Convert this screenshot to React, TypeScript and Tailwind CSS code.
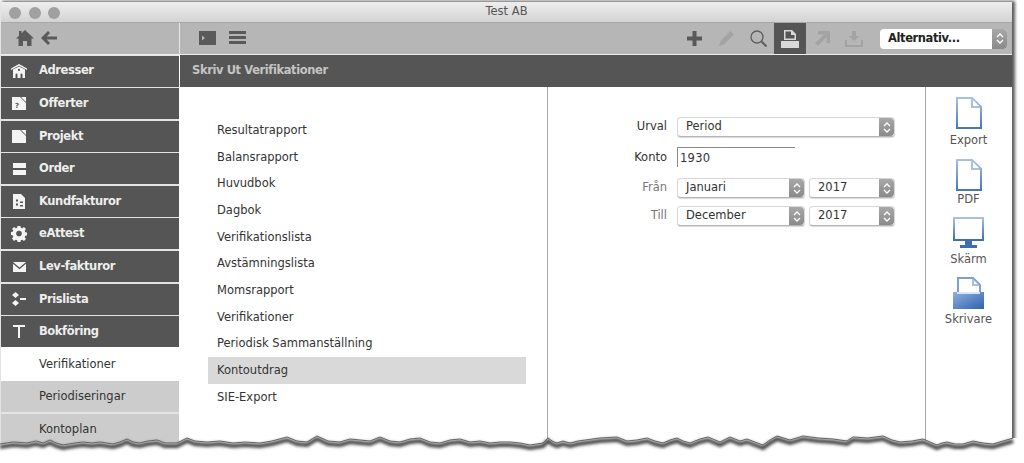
import type { ReactNode } from "react";

const font = { fontFamily: '"DejaVu Sans", Verdana, sans-serif' };

const Ico = ({ w = 18, h = 18, children, className = "" }: { w?: number; h?: number; children: ReactNode; className?: string }) => (
  <svg width={w} height={h} viewBox={`0 0 ${w} ${h}`} className={`shrink-0 ${className}`} fill="currentColor">
    {children}
  </svg>
);

const sideIcons: Record<string, ReactNode> = {
  Adresser: (
    <Ico w={16} h={14}>
      <path d="M8 0 16 4.500V6L8 1.800 0 6V4.500z" />
      <path fillRule="evenodd" d="M2 5.500 8 2.500l6 3V14h-2.500v-3.500a1 1 0 0 0-2 0V14h-3v-3.500a1 1 0 0 0-2 0V14H2zM8 4.800a1.100 1.100 0 1 0 0 2.200 1.100 1.100 0 0 0 0-2.200z" />
    </Ico>
  ),
  Offerter: (
    <Ico w={14} h={13}>
      <path d="M0 0h8l6 6v7H0zM9 0l5 5V0z" />
      <text x="3" y="11" fontSize="7" fill="#555" fontWeight="700">?</text>
    </Ico>
  ),
  Projekt: (
    <Ico w={14} h={13}>
      <path d="M0 0h8l6 6v7H0zM9 0l5 5V0z" />
    </Ico>
  ),
  Order: (
    <Ico w={13} h={12}>
      <path d="M0 0h13v5H0zM0 7h13v5H0z" />
    </Ico>
  ),
  Kundfakturor: (
    <Ico w={12} h={15}>
      <path d="M0 0h8l4 4v11H0z" />
      <path d="M3 5.500h2v2H3zM3 9.500h2v2H3zM7 7.500h3v1.500H7zM7 11h3v1.500H7z" fill="#555" />
    </Ico>
  ),
  eAttest: (
    <Ico w={16} h={16}>
      <path
        fillRule="evenodd"
        d="M6.500 0h3l.4 2.300 1.500.6L13.300 1.600l2.100 2.100-1.300 1.900.6 1.500 2.300.4v3l-2.300.4-.6 1.500 1.300 1.900-2.100 2.100-1.900-1.300-1.500.6-.4 2.300h-3l-.4-2.300-1.500-.6-1.900 1.300L.6 13.800l1.300-1.900-.6-1.500L-1 10V7l2.300-.4.600-1.500L.6 3.700l2.100-2.100 1.900 1.300 1.500-.6zM8 5.500a3 3 0 1 0 0 6 3 3 0 0 0 0-6z"
        transform="scale(.94) translate(.5 -.5)"
      />
    </Ico>
  ),
  "Lev-fakturor": (
    <Ico w={13} h={10}>
      <path d="M0 0h13L6.500 5.500zM0 1.800V10h13V1.800L6.500 7.300z" />
    </Ico>
  ),
  Prislista: (
    <Ico w={14} h={14}>
      <path d="M3.500 0 7 3 3.500 6 0 3zM3.500 8 7 11l-3.500 3L0 11zM8 6h6v2H8z" />
    </Ico>
  ),
  "Bokföring": (
    <Ico w={12} h={13}>
      <path d="M0 0h12v2H7v11H5V2H0z" />
    </Ico>
  ),
};

const mainItems = ["Adresser", "Offerter", "Projekt", "Order", "Kundfakturor", "eAttest", "Lev-fakturor", "Prislista", "Bokföring"];
const reports = [
  "Resultatrapport",
  "Balansrapport",
  "Huvudbok",
  "Dagbok",
  "Verifikationslista",
  "Avstämningslista",
  "Momsrapport",
  "Verifikationer",
  "Periodisk Sammanställning",
  "Kontoutdrag",
  "SIE-Export",
];

const Stepper = () => (
  <span className="absolute right-0 top-0 bottom-0 w-[15px] rounded-r-[4px] bg-gradient-to-b from-[#a8a8a8] to-[#8a8a8a] flex items-center justify-center">
    <svg width="8" height="13" viewBox="0 0 8 13" fill="none" stroke="#fff" strokeWidth="1.300">
      <path d="M1 5 4 2l3 3M1 8l3 3 3-3" />
    </svg>
  </span>
);

const Select = ({ label, className = "" }: { label: string; className?: string }) => (
  <div className={`relative h-5 rounded-[4px] bg-white border border-[#d8d8d8] border-b-[#b5b5b5] shadow-[0_1px_1px_rgba(0,0,0,.15)] pl-2 flex items-center text-[11.500px] text-[#333] ${className}`}>
    {label}
    <Stepper />
  </div>
);

const Label = ({ children, muted = false, className = "" }: { children: ReactNode; muted?: boolean; className?: string }) => (
  <span className={`w-[50px] mr-[10px] text-right text-[11.500px] ${muted ? "text-[#777]" : "text-[#333]"} ${className}`}>{children}</span>
);

const PageIcon = () => (
  <svg width="26" height="32" viewBox="0 0 26 32">
    <defs>
      <linearGradient id="pg" x1="0" y1="0" x2="0" y2="1">
        <stop offset="0" stopColor="#a9c0e0" />
        <stop offset="1" stopColor="#4a76b8" />
      </linearGradient>
    </defs>
    <path d="M1 1h15l9 9v21H1z" fill="#fff" stroke="url(#pg)" strokeWidth="2" />
    <path d="M15 1v10h10z" fill="#a9c0e0" />
    <path d="M17 3v6h6z" fill="#fff" />
  </svg>
);

const ScreenIcon = () => (
  <svg width="31" height="32" viewBox="0 0 31 32">
    <defs>
      <linearGradient id="sc" x1="0" y1="0" x2="0" y2="1">
        <stop offset="0" stopColor="#a9c0e0" />
        <stop offset="1" stopColor="#3f6db2" />
      </linearGradient>
    </defs>
    <rect x="1" y="1" width="29" height="22" fill="#fff" stroke="url(#sc)" strokeWidth="2" />
    <path d="M12 24h7v4h5v3H7v-3h5z" fill="#3f6db2" />
  </svg>
);

const PrinterIcon = () => (
  <svg width="31" height="32" viewBox="0 0 31 32">
    <defs>
      <linearGradient id="pr" x1="0" y1="0" x2="1" y2="1">
        <stop offset="0" stopColor="#8fb0de" />
        <stop offset="1" stopColor="#2f62ae" />
      </linearGradient>
    </defs>
    <path d="M5 1h15l7 7v10H5z" fill="#fff" stroke="#7f9fd0" strokeWidth="2" />
    <path d="M19 1v8h8z" fill="#a9c0e0" />
    <path d="M21 3.500V7h3.500z" fill="#fff" />
    <path d="M0 15h31v17H0z" fill="url(#pr)" />
    <path d="M4 15h23v2H4z" fill="#dbe5f4" />
  </svg>
);

const edge =
  "0,444 13,442 27,443 36,441 43,443 50,440 56,443 63,445 75,443 83,442 92,443 100,442 113,444 120,442 127,439 133,442 140,443 148,441 157,440 165,443 177,443 187,438 195,441 207,442 220,441 233,443 245,442 260,443 272,441 287,437 297,441 307,442 317,436 328,441 340,442 350,439 360,440 370,441 380,437 390,441 400,442 410,439 420,438 430,442 440,443 450,440 460,439 470,442 480,441 490,443 500,442 510,442 520,443 530,445 543,443 548,438 552,441 557,443 563,441 570,443 578,441 600,438 617,437 627,441 637,440 647,438 655,441 663,443 670,440 677,438 683,441 690,443 700,439 708,437 720,442 730,437 740,441 747,439 755,442 763,445 770,440 777,436 790,440 803,436 818,438 833,439 847,441 853,437 868,438 883,436 892,440 900,442 912,441 923,439 930,442 937,445 942,443 947,442 955,444 963,444 973,441 983,443 993,444 1003,441 1010,439 1013,438";

const TornEdge = () => (
  <svg width="1024" height="463" viewBox="0 0 1024 463" className="absolute inset-0 pointer-events-none">
    <defs>
      <filter id="bl" x="-5%" y="-300%" width="110%" height="700%">
        <feGaussianBlur stdDeviation="1.800" />
      </filter>
    </defs>
    <polygon points={`${edge} 1024,438 1024,463 0,463`} fill="#fff" />
    <polyline points={edge} transform="translate(0 3)" fill="none" stroke="#444" strokeWidth="4" filter="url(#bl)" />
    <polyline points={edge} fill="none" stroke="#666" strokeWidth="1" />
  </svg>
);

export default function App() {
  return (
    <div className="relative w-[1024px] h-[463px] overflow-hidden bg-white antialiased" style={font}>
      <div className="ml-px mt-[2px] w-[1011px] h-[461px] flex flex-col shadow-[2px_0_3px_1px_rgba(0,0,0,.65)] bg-white">
        {/* title bar */}
        <div className="relative h-[21px] shrink-0 bg-gradient-to-b from-[#eeeeee] to-[#d3d3d3] flex items-center justify-center text-[11.500px] text-[#555] border-b border-[#a8a8a8]">
          <div className="absolute left-[8px] top-[5px] flex gap-[7.500px]">
            <span className="size-3 rounded-full bg-[#a0a0a0]" />
            <span className="size-3 rounded-full bg-[#a0a0a0]" />
            <span className="size-3 rounded-full bg-[#a0a0a0]" />
          </div>
          Test AB
        </div>

        {/* toolbar */}
        <div className="h-[31px] shrink-0 bg-[#b6b6b6] flex">
          <div className="w-[179px] shrink-0 flex items-center text-[#5a5a5a] pl-[15px] pb-[2px] gap-[7px] border-r border-[#e8e8e8]">
            <svg width="18" height="16" viewBox="0 0 18 16" fill="currentColor">
              <path d="M9 0 18 8.500h-2.500V16H11v-5H7v5H2.500V8.500H0L3 5.700V1h2.500v2.300z" />
            </svg>
            <svg width="16" height="14" viewBox="0 0 16 14" fill="currentColor">
              <path d="M7 0l2 2-3.300 3.500H16v3H5.700L9 12l-2 2-7-7z" />
            </svg>
          </div>
          <div className="flex-1 flex items-center text-[#5a5a5a] pl-[19px]">
            <svg width="17" height="14" viewBox="0 0 17 14" fill="currentColor" className="-mt-[2px]">
              <path fillRule="evenodd" d="M0 0h17v14H0zM3 4.500v5L6 7z" />
            </svg>
            <svg width="17" height="13" viewBox="0 0 17 13" fill="currentColor" className="ml-[13px] -mt-[2px]">
              <path d="M0 0h17v3H0zM0 5h17v3H0zM0 10h17v3H0z" />
            </svg>
            <div className="ml-auto flex items-center h-full">
              <span className="w-8 flex justify-center">
                <svg width="15" height="15" viewBox="0 0 15 15" fill="#595959">
                  <path d="M5.500 0h4v5.500H15v4H9.500V15h-4V9.500H0v-4h5.500z" />
                </svg>
              </span>
              <span className="w-8 flex justify-center">
                <svg width="15" height="15" viewBox="0 0 15 15" fill="#a3a3a3">
                  <path d="M11.500 0 15 3.500 5 13.500 0 15l1.500-5z" />
                </svg>
              </span>
              <span className="w-8 flex justify-center">
                <svg width="17" height="17" viewBox="0 0 17 17" fill="none" stroke="#5f5f5f" strokeWidth="1.300">
                  <circle cx="7" cy="7" r="6" />
                  <path d="m11.500 11.500 5 5" strokeWidth="2" />
                </svg>
              </span>
              <span className="w-8 h-full bg-[#555] flex items-center justify-center">
                <svg width="18" height="18" viewBox="0 0 18 18" fill="#d8d8d8">
                  <path fillRule="evenodd" d="M3 0h8l4 4v6H3zM4.500 1.500V8.500h9V5H10V1.500z" />
                  <path d="M0 11h18v7H0z" />
                </svg>
              </span>
              <span className="w-8 flex justify-center">
                <svg width="15" height="15" viewBox="0 0 15 15" fill="#a3a3a3">
                  <path d="M3 0h12v12h-3.500V6L3 15l-3-3 9-8.500H3z" />
                </svg>
              </span>
              <span className="w-8 flex justify-center">
                <svg width="18" height="16" viewBox="0 0 18 16" fill="#a3a3a3">
                  <path d="M7 0h4v5h3l-5 5-5-5h3zM0 9h2v5h14V9h2v7H0z" />
                </svg>
              </span>
              <div className="relative ml-[10px] mr-[5px] w-[127px] h-5 rounded-[4px] bg-white pl-2 flex items-center text-[11.500px] tracking-[-0.400px] font-bold text-[#222]">
                Alternativ...
                <Stepper />
              </div>
            </div>
          </div>
        </div>

        <div className="h-[1px] shrink-0 bg-[#eeeeee]" />

        <div className="flex-1 flex min-h-0">
          {/* sidebar */}
          <div className="w-[178px] shrink-0 mr-px pt-[0.500px] flex flex-col bg-[#e4e4e4]">
            {mainItems.map((item) => (
              <div key={item} className="h-[31px] mb-[1.600px] shrink-0 bg-[#555] flex items-center text-[11.500px] tracking-[-0.400px] font-bold text-[#eeeeee]">
                <span className="w-[38px] flex justify-center pl-[6px] pr-[8px] text-[#f4f4f4]">{sideIcons[item]}</span>
                {item}
              </div>
            ))}
            <div className="h-[34px] -mt-[1.600px] shrink-0 bg-white flex items-center pl-[38px] text-[11.500px] text-[#333]">Verifikationer</div>
            <div className="h-[31px] mb-[1.600px] shrink-0 bg-[#cccccc] flex items-center pl-[38px] text-[11.500px] text-[#333]">Periodiseringar</div>
            <div className="h-[31px] shrink-0 bg-[#cccccc] flex items-center pl-[38px] text-[11.500px] text-[#333]">Kontoplan</div>
          </div>

          <div className="flex-1 flex flex-col min-w-0">
            {/* heading */}
            <div className="h-[32px] shrink-0 bg-[#555] flex items-center pl-3 pb-px text-[11.500px] tracking-[-0.400px] font-bold text-[#c4c4c4]">Skriv Ut Verifikationer</div>

            <div className="flex-1 flex min-h-0">
              {/* report list */}
              <div className="w-[368px] shrink-0 border-r border-[#a8a8a8] pt-[30.500px] pl-[28px] pr-[21px]">
                {reports.map((r) => (
                  <div key={r} className={`h-[26.650px] flex items-center pl-[9px] text-[11.500px] text-[#333] ${r === "Kontoutdrag" ? "bg-[#d9d9d9]" : ""}`}>
                    {r}
                  </div>
                ))}
              </div>

              {/* form */}
              <div className="w-[378px] shrink-0 border-r border-[#a8a8a8] pt-[30px] pl-[69px] flex flex-col">
                <div className="flex items-center">
                  <Label>Urval</Label>
                  <Select label="Period" className="w-[218px]" />
                </div>
                <div className="flex items-center mt-[10px]">
                  <Label className="pt-[2px]">Konto</Label>
                  <div className="w-[118px] h-5 pt-[2px] border-t border-l border-[#8a8a8a] pl-[2px] flex items-center text-[11.500px] text-[#333] tracking-wide">1930</div>
                </div>
                <div className="flex items-center mt-[11px]">
                  <Label muted>Från</Label>
                  <Select label="Januari" className="w-[128px]" />
                  <Select label="2017" className="w-[86px] ml-[4px]" />
                </div>
                <div className="flex items-center mt-[8px]">
                  <Label muted>Till</Label>
                  <Select label="December" className="w-[128px]" />
                  <Select label="2017" className="w-[86px] ml-[4px]" />
                </div>
              </div>

              {/* output choices */}
              <div className="flex-1 flex flex-col items-center pt-[10px] text-[11.500px] text-[#555] pr-[1px]">
                <PageIcon />
                <span className="mt-[3px] h-[17px] leading-[17px]">Export</span>
                <span className="mt-[10px]"><PageIcon /></span>
                <span className="h-[16px] leading-[16px]">PDF</span>
                <span className="mt-[10px]"><ScreenIcon /></span>
                <span className="mt-[2px] h-[16px] leading-[16px]">Skärm</span>
                <span className="mt-[10px]"><PrinterIcon /></span>
                <span className="mt-[2px] h-[16px] leading-[16px]">Skrivare</span>
              </div>
            </div>
          </div>
        </div>
      </div>
      <TornEdge />
    </div>
  );
}
